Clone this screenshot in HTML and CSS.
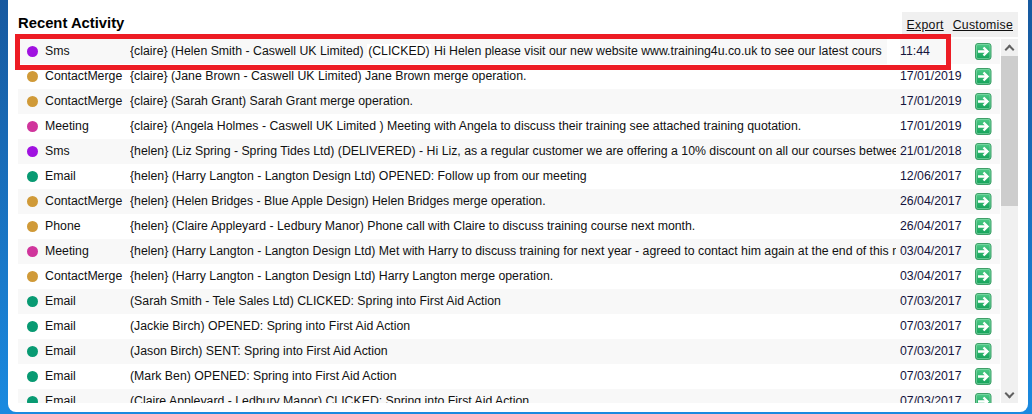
FILE: index.html
```html
<!DOCTYPE html>
<html lang="en">
<head>
  <meta charset="UTF-8">
  <title>Recent Activity</title>
  <link rel="stylesheet" href="styles.css">
</head>
<body>
  <div class="panel">
    <div class="panel-head">
      <h2>Recent Activity</h2>
      <div class="head-links">
        <a href="#">Export</a>
        <a href="#">Customise</a>
      </div>
    </div>
    <div class="list-wrap">
      <div class="rows" id="rows"></div>
      <div class="scrollbar">
        <div class="arrow up"></div>
        <div class="track"><div class="thumb"></div></div>
        <div class="arrow down"></div>
      </div>
    </div>
    <div class="highlight"></div>
  </div>

  <script>
    const rowData = [
      ['sms', 'Sms', '{claire} (Helen Smith - Caswell UK Limited) <span class="clicked">(CLICKED)</span> Hi Helen please visit our new website www.training4u.co.uk to see our latest courses and special offers for this year', '11:44'],
      ['merge', 'ContactMerge', '{claire} (Jane Brown - Caswell UK Limited) Jane Brown merge operation.', '17/01/2019'],
      ['merge', 'ContactMerge', '{claire} (Sarah Grant) Sarah Grant merge operation.', '17/01/2019'],
      ['meeting', 'Meeting', '{claire} (Angela Holmes - Caswell UK Limited ) Meeting with Angela to discuss their training see attached training quotation.', '17/01/2019'],
      ['sms', 'Sms', '{helen} (Liz Spring - Spring Tides Ltd) (DELIVERED) - Hi Liz, as a regular customer we are offering a 10% discount on all our courses between now and', '21/01/2018'],
      ['email', 'Email', '{helen} (Harry Langton - Langton Design Ltd) OPENED: Follow up from our meeting', '12/06/2017'],
      ['merge', 'ContactMerge', '{helen} (Helen Bridges - Blue Apple Design) Helen Bridges merge operation.', '26/04/2017'],
      ['merge', 'Phone', '{helen} (Claire Appleyard - Ledbury Manor) Phone call with Claire to discuss training course next month.', '26/04/2017'],
      ['meeting', 'Meeting', '{helen} (Harry Langton - Langton Design Ltd) Met with Harry to discuss training for next year - agreed to contact him again at the end of this month', '03/04/2017'],
      ['merge', 'ContactMerge', '{helen} (Harry Langton - Langton Design Ltd) Harry Langton merge operation.', '03/04/2017'],
      ['email', 'Email', '(Sarah Smith - Tele Sales Ltd) CLICKED: Spring into First Aid Action', '07/03/2017'],
      ['email', 'Email', '(Jackie Birch) OPENED: Spring into First Aid Action', '07/03/2017'],
      ['email', 'Email', '(Jason Birch) SENT: Spring into First Aid Action', '07/03/2017'],
      ['email', 'Email', '(Mark Ben) OPENED: Spring into First Aid Action', '07/03/2017'],
      ['email', 'Email', '(Claire Appleyard - Ledbury Manor) CLICKED: Spring into First Aid Action', '07/03/2017']
    ];

    const goIcon = '<svg class="go" width="17" height="17" viewBox="0 0 17 17">' +
      '<defs><linearGradient id="goFill" x1="0" y1="0" x2="0" y2="1">' +
      '<stop offset="0" stop-color="#4fcb88"/><stop offset="1" stop-color="#12a158"/></linearGradient></defs>' +
      '<rect x="0.5" y="0.5" width="15.5" height="16" rx="2.5" fill="url(#goFill)" stroke="#3f9f68"/>' +
      '<rect x="1.5" y="1.5" width="13.5" height="14" rx="1.5" fill="none" stroke="#8fdcb0" stroke-opacity="0.6"/>' +
      '<path d="M3 8.5h9M8.5 4.5l4 4-4 4" fill="none" stroke="#fff" stroke-width="2.4"/></svg>';

    document.getElementById('rows').innerHTML = rowData.map(r =>
      '<div class="row">' +
        '<span class="dot ' + r[0] + '"></span>' +
        '<span class="type">' + r[1] + '</span>' +
        '<span class="desc">' + r[2] + '</span>' +
        '<span class="date">' + r[3] + '</span>' +
        '<span class="action">' + goIcon + '</span>' +
      '</div>'
    ).join('');
  </script>
</body>
</html>
```

FILE: styles.css
```css
html, body {
  height: 100%;
}

body {
  margin: 0;
  padding: 0 4px 2px 8px;
  box-sizing: border-box;
  background: linear-gradient(to bottom, #17599f, #1a8ae0);
  font-family: "Liberation Sans", Arial, sans-serif;
  font-size: 12.3px;
  color: #111;
  overflow: hidden;
}

.panel {
  position: relative;
  height: 100%;
  box-sizing: border-box;
  padding: 12px 10px 9px 10px;
  background: #fff;
  border-radius: 0 0 8px 8px;
  overflow: hidden;
}

.panel-head {
  display: flex;
  justify-content: space-between;
  align-items: flex-end;
  height: 25px;
  margin-bottom: 2px;
}

.panel-head h2 {
  margin: 0 0 6px 0;
  font-size: 14.8px;
  font-weight: bold;
  color: #000;
}

.head-links {
  display: flex;
  gap: 9px;
  height: 25px;
  box-sizing: border-box;
  padding: 6px 5px 0 5px;
  background: #f0f0f0;
}

.head-links a {
  color: #111;
  letter-spacing: 0.25px;
  text-decoration: underline;
}

.list-wrap {
  display: flex;
  height: 364px;
}

.rows {
  flex: 1;
  min-width: 0;
  overflow: hidden;
}

.row {
  display: flex;
  align-items: center;
  height: 25px;
  padding-left: 9px;
}

.row:nth-child(odd) {
  background: #f8f8f8;
}

.dot {
  flex: none;
  width: 11px;
  height: 11px;
  margin-right: 7px;
  border-radius: 50%;
}

.dot.sms { background: #a012e0; }
.dot.merge { background: #d09a38; }
.dot.meeting { background: #d0359c; }
.dot.email { background: #089a72; }

.type {
  flex: none;
  width: 85px;
  padding-bottom: 1px;
}

.desc {
  flex: none;
  width: 766px;
  margin-right: 4px;
  padding-bottom: 1px;
  white-space: nowrap;
  overflow: hidden;
}

.clicked {
  padding: 0 1px;
  background: #fff;
}

.date {
  flex: none;
  width: 75px;
  padding-bottom: 1px;
  color: #14143c;
}

/* the first row was patched: its text stops short and the date sits on white */
.row:first-child .desc {
  width: 752px;
  margin-right: 5px;
}

.row:first-child .date {
  width: 75px;
  padding: 5px 0 6px 13px;
  background: linear-gradient(to right, #fff 13px, transparent 13px);
}

.action {
  display: flex;
  flex: none;
}

.scrollbar {
  display: flex;
  flex-direction: column;
  flex: none;
  width: 17px;
  margin-left: 1px;
  background: #f0f0f0;
}

.arrow {
  flex: none;
  height: 17px;
  position: relative;
}

.arrow::after {
  content: "";
  position: absolute;
  left: 5px;
  width: 7px;
  height: 7px;
  border-left: 2px solid #606060;
  border-top: 2px solid #606060;
  box-sizing: border-box;
  transform: rotate(45deg);
  top: 7px;
}

.arrow.down::after {
  transform: rotate(225deg);
  top: 4px;
}

.track {
  flex: 1;
}

.thumb {
  height: 150px;
  background: #cdcdcd;
}

/* red box drawn over the first row */
.highlight {
  position: absolute;
  left: 7px;
  top: 34px;
  width: 936px;
  height: 36px;
  box-sizing: border-box;
  border: 5px solid #ed1c24;
}
```
